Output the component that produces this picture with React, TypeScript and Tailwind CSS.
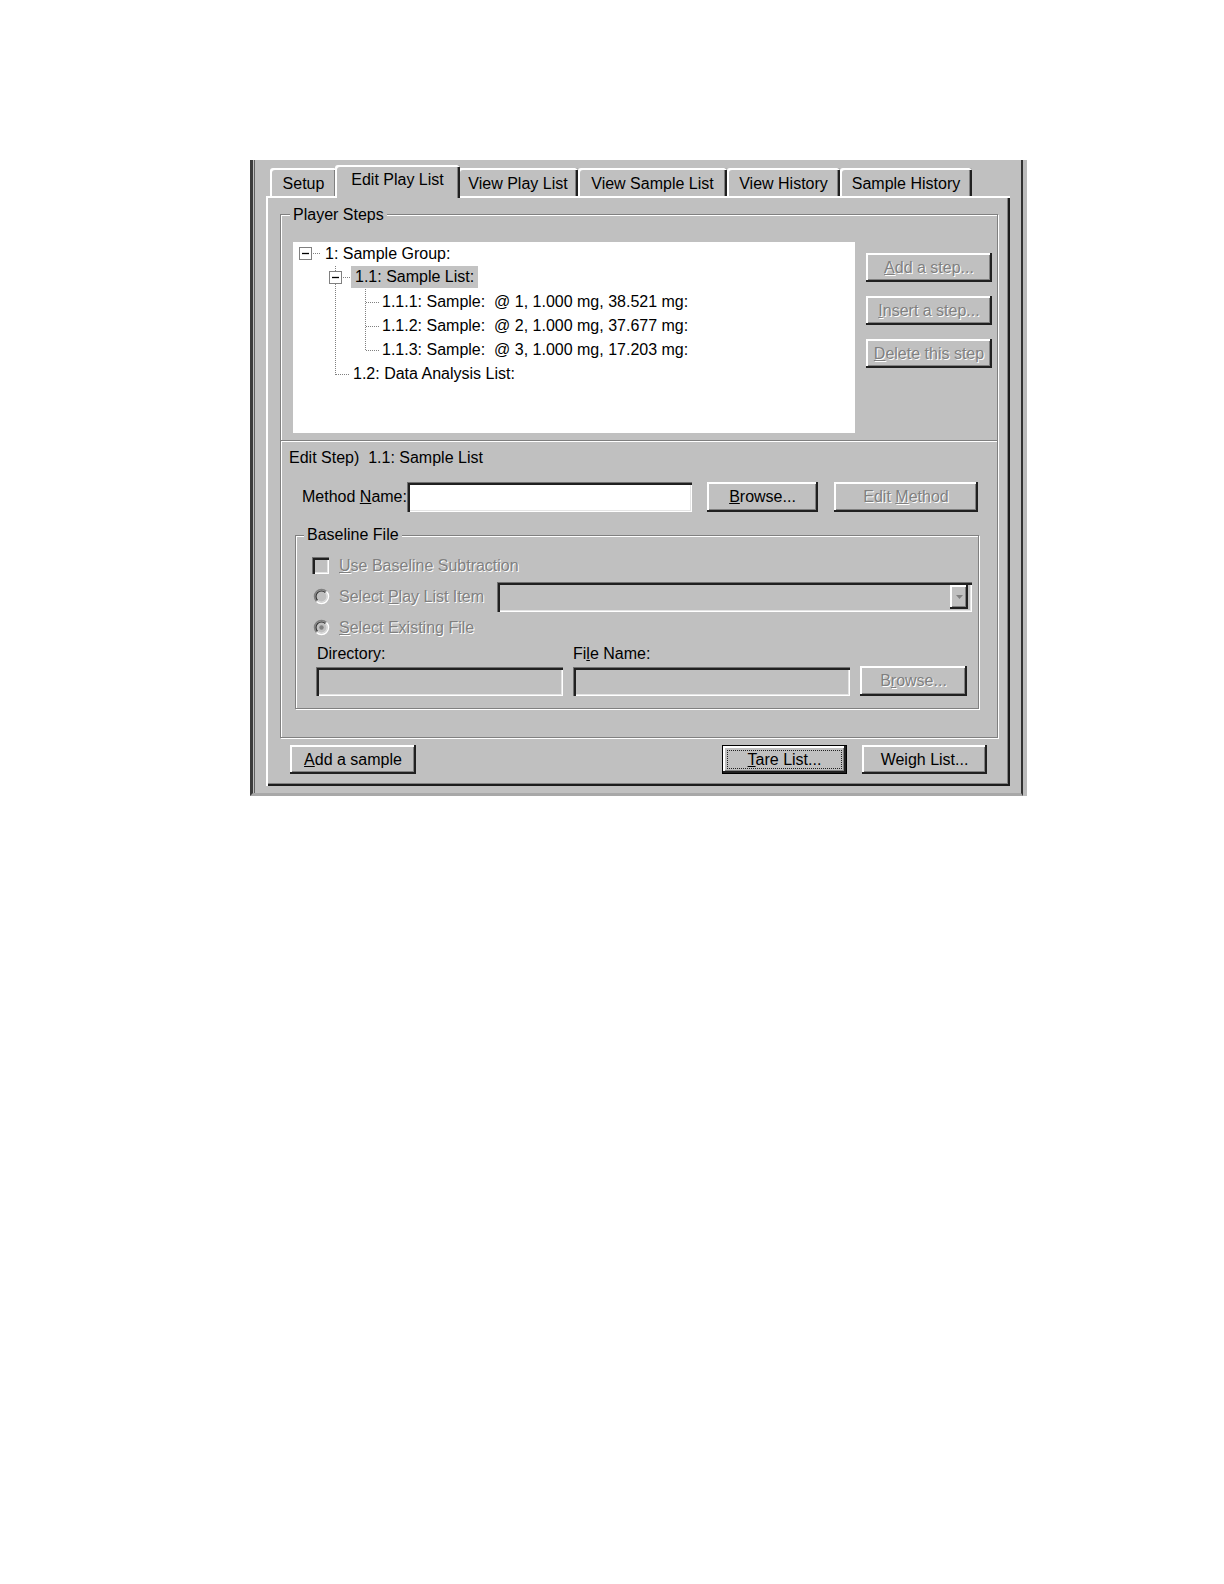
import React from "react";

const raised =
  "shadow-[inset_-2px_-2px_0_#202020,inset_2px_2px_0_#fff,inset_-3px_-3px_0_#808080]";
const sunken =
  "shadow-[inset_1px_1px_0_#707070,inset_3px_3px_0_#202020,inset_-1px_-1px_0_#fff,inset_-2px_-2px_0_#e4e4e4]";
const etched = "border border-[#808080] shadow-[1px_1px_0_#fff,inset_1px_1px_0_#fff]";
const disabledText = "text-[#808080] [text-shadow:1px_1px_0_#fff]";

const tabs = [
  { label: "Setup", w: "w-[67px]" },
  { label: "Edit Play List", w: "w-[125px]", active: true },
  { label: "View Play List", w: "w-[120px]" },
  { label: "View Sample List", w: "w-[149px]" },
  { label: "View History", w: "w-[113px]" },
  { label: "Sample History", w: "w-[132px]" },
];

const Btn: React.FC<{
  w: string;
  h?: string;
  disabled?: boolean;
  className?: string;
  children: React.ReactNode;
}> = ({ w, h = "h-[29px]", disabled, className = "", children }) => (
  <div
    className={`${w} ${h} ${raised} bg-[#c0c0c0] flex items-center justify-center ${
      disabled ? disabledText : "text-black"
    } ${className}`}
  >
    <span className="whitespace-pre">{children}</span>
  </div>
);

const Radio: React.FC<{ checked?: boolean }> = ({ checked }) => (
  <svg width="17" height="17" viewBox="0 0 17 17" className="shrink-0">
    <circle cx="8.5" cy="8.5" r="7" fill="#c0c0c0" />
    <path d="M3.55 13.45 A7 7 0 0 1 13.45 3.55" fill="none" stroke="#808080" strokeWidth="1.5" />
    <path d="M13.45 3.55 A7 7 0 0 1 3.55 13.45" fill="none" stroke="#fff" strokeWidth="1.5" />
    <path d="M4.6 12.4 A5.5 5.5 0 0 1 12.4 4.6" fill="none" stroke="#303030" strokeWidth="1.2" />
    <path d="M12.4 4.6 A5.5 5.5 0 0 1 4.6 12.4" fill="none" stroke="#dcdcdc" strokeWidth="1.2" />
    {checked && <circle cx="8.5" cy="8.5" r="2.2" fill="#808080" />}
  </svg>
);

const TreeLines: React.FC = () => (
  <svg className="absolute left-0 top-0" width="562" height="191">
    <g fill="#fff" stroke="#808080">
      <rect x="6.5" y="5.5" width="12" height="12" />
      <rect x="36.5" y="29.5" width="12" height="12" />
    </g>
    <g stroke="#000" strokeWidth="1.3">
      <line x1="9" y1="11.5" x2="16" y2="11.5" />
      <line x1="39" y1="35.5" x2="46" y2="35.5" />
    </g>
    <g stroke="#808080" strokeDasharray="1 1">
      <line x1="20" y1="11.5" x2="28" y2="11.5" />
      <line x1="42.5" y1="24" x2="42.5" y2="29" />
      <line x1="42.5" y1="42" x2="42.5" y2="133" />
      <line x1="50" y1="35.5" x2="57" y2="35.5" />
      <line x1="43" y1="132.5" x2="56" y2="132.5" />
      <line x1="72.5" y1="47" x2="72.5" y2="109" />
      <line x1="73" y1="60.5" x2="86" y2="60.5" />
      <line x1="73" y1="84.5" x2="86" y2="84.5" />
      <line x1="73" y1="108.5" x2="86" y2="108.5" />
    </g>
  </svg>
);

export default function App() {
  return (
    <div className="min-h-[1584px] bg-white pt-[160px] [font-family:'Liberation_Sans',Arial,sans-serif] text-[16px] leading-[20px] text-black">
      <div className="ml-[250px] w-[773px] h-[636px] bg-[#c0c0c0] border-l-[3px] border-l-[#3c3c3c] border-r-[2px] border-r-[#333] border-b-[3px] border-b-[#a8a8a8] shadow-[inset_1px_0_0_#c0c0c0,inset_2px_0_0_#606060,4px_0_0_#bcbcbc]">
        <div className="ml-[13px] w-[744px] flex flex-col">
          {/* tab strip */}
          <div className="h-[36px] flex items-end pl-[4px]">
            {tabs.map((t) =>
              t.active ? (
                <div
                  key={t.label}
                  className={`${t.w} relative z-10 -mx-[2px] -mb-[2px] h-[33px] pb-[3px] bg-[#c0c0c0] rounded-t-[3px] flex items-center justify-center shadow-[inset_2px_2px_0_#fff,inset_-2px_0_0_#202020,inset_-3px_0_0_#808080]`}
                >
                  {t.label}
                </div>
              ) : (
                <div
                  key={t.label}
                  className={`${t.w} h-[28px] pt-[3px] bg-[#c0c0c0] rounded-t-[3px] flex items-center justify-center shadow-[inset_2px_2px_0_#fff,inset_-2px_0_0_#202020,inset_-3px_0_0_#808080]`}
                >
                  {t.label}
                </div>
              )
            )}
          </div>

          {/* tab page */}
          <div className="h-[590px] flex flex-col shadow-[inset_2px_2px_0_#fff,inset_-2px_-2px_0_#1c1c1c,inset_-3px_-3px_0_#808080]">
            <div className={`relative ml-[14px] mt-[18px] w-[718px] h-[524px] ${etched} flex flex-col`}>
              <div className="absolute left-[9px] -top-[10px] px-[3px] bg-[#c0c0c0]">Player Steps</div>

              <div className="flex pl-[12px] pt-[27px]">
                <div className="relative w-[562px] h-[191px] bg-white">
                  <TreeLines />
                  <div className="flex flex-col whitespace-pre">
                    <div className="h-[24px] flex items-center pl-[32px]">1: Sample Group:</div>
                    <div className="h-[24px] pl-[58px]">
                      <span className="inline-block h-[22px] leading-[22px] px-[4px] bg-[#c3c3c3]">1.1: Sample List:</span>
                    </div>
                    <div className="h-[24px] flex items-center pl-[89px]">1.1.1: Sample:  @ 1, 1.000 mg, 38.521 mg:</div>
                    <div className="h-[24px] flex items-center pl-[89px]">1.1.2: Sample:  @ 2, 1.000 mg, 37.677 mg:</div>
                    <div className="h-[24px] flex items-center pl-[89px]">1.1.3: Sample:  @ 3, 1.000 mg, 17.203 mg:</div>
                    <div className="h-[24px] flex items-center pl-[60px]">1.2: Data Analysis List:</div>
                  </div>
                </div>
                <div className="ml-[11px] pt-[11px] flex flex-col gap-[14px]">
                  <Btn w="w-[126px]" disabled>
                    <u>A</u>dd a step...
                  </Btn>
                  <Btn w="w-[126px]" disabled>
                    <u>I</u>nsert a step...
                  </Btn>
                  <Btn w="w-[126px]" disabled>
                    <u>D</u>elete this step
                  </Btn>
                </div>
              </div>

              <div className="mt-[7px] h-0 border-t border-[#808080] shadow-[0_1px_0_#fff]" />

              <div className="mt-[7px] h-[20px] pl-[8px] whitespace-pre">Edit Step)  1.1: Sample List</div>

              <div className="mt-[14px] h-[30px] flex items-center pl-[21px]">
                <div className="w-[105px]">
                  Method <u>N</u>ame:
                </div>
                <div className={`w-[285px] h-[30px] bg-white ${sunken}`} />
                <Btn w="w-[111px]" h="h-[30px]" className="ml-[15px]">
                  <u>B</u>rowse...
                </Btn>
                <Btn w="w-[144px]" h="h-[30px]" className="ml-[16px]" disabled>
                  Edit <u>M</u>ethod
                </Btn>
              </div>

              {/* baseline file group */}
              <div className={`relative mt-[23px] ml-[14px] w-[684px] h-[174px] ${etched} flex flex-col pt-[14px]`}>
                <div className="absolute left-[8px] -top-[11px] px-[3px] bg-[#c0c0c0]">Baseline File</div>

                <div className="h-[31px] flex items-center pl-[16px]">
                  <div className={`w-[17px] h-[17px] bg-[#c0c0c0] ${sunken}`} />
                  <div className={`ml-[10px] ${disabledText}`}>
                    <u>U</u>se Baseline Subtraction
                  </div>
                </div>

                <div className="h-[31px] flex items-center">
                  <div className="w-[201px] flex items-center pl-[17px]">
                    <Radio />
                    <div className={`ml-[9px] ${disabledText}`}>
                      Select <u>P</u>lay List Item
                    </div>
                  </div>
                  <div className={`w-[475px] h-[30px] bg-[#c0c0c0] ${sunken} flex items-center justify-end pr-[4px]`}>
                    <div className={`w-[18px] h-[24px] ${raised} bg-[#c0c0c0] flex items-center justify-center`}>
                      <svg width="7" height="4" viewBox="0 0 7 4">
                        <polygon points="0,0 7,0 3.5,4" fill="#808080" />
                      </svg>
                    </div>
                  </div>
                </div>

                <div className="h-[31px] flex items-center pl-[17px]">
                  <Radio checked />
                  <div className={`ml-[9px] ${disabledText}`}>
                    <u>S</u>elect Existing File
                  </div>
                </div>

                <div className="mt-[1px] h-[20px] flex pl-[21px]">
                  <div className="w-[256px]">Directory:</div>
                  <div>
                    Fi<u>l</u>e Name:
                  </div>
                </div>

                <div className="mt-[2px] flex items-center pl-[20px]">
                  <div className={`w-[247px] h-[29px] bg-[#c0c0c0] ${sunken}`} />
                  <div className={`ml-[10px] w-[277px] h-[29px] bg-[#c0c0c0] ${sunken}`} />
                  <Btn w="w-[107px]" h="h-[30px]" className="ml-[10px]" disabled>
                    B<u>r</u>owse...
                  </Btn>
                </div>
              </div>
            </div>

            {/* bottom buttons */}
            <div className="mt-[7px] flex pl-[24px] pr-[23px]">
              <Btn w="w-[126px]">
                <u>A</u>dd a sample
              </Btn>
              <div className={`ml-auto w-[125px] h-[29px] border border-black bg-[#c0c0c0] ${raised} flex p-[4px]`}>
                <div className="flex-1 border border-dotted border-[#222] flex items-center justify-center leading-[18px]">
                  <span>
                    <u>T</u>are List...
                  </span>
                </div>
              </div>
              <Btn w="w-[125px]" className="ml-[15px]">
                Weigh List...
              </Btn>
            </div>
          </div>
        </div>
      </div>
    </div>
  );
}
